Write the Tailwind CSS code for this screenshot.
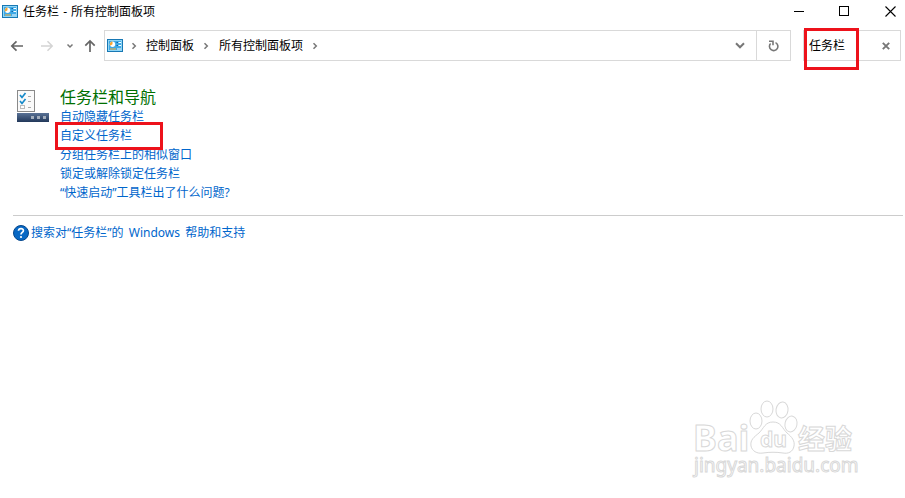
<!DOCTYPE html>
<html lang="zh-CN">
<head>
    <meta charset="UTF-8">
    <meta name="viewport" content="width=device-width, initial-scale=1.0">
    <title>任务栏 - 所有控制面板项</title>
    <script src="https://cdn.jsdelivr.net/npm/@tailwindcss/browser@4"></script>
</head>
<body class="min-h-screen bg-white font-['Noto_Sans','Noto_Sans_CJK_SC',sans-serif] text-[12px] leading-[19px] text-black">

    <!-- Shared control panel icon -->
    <svg class="hidden">
        <symbol id="control-panel" viewBox="0 0 16 13">
            <rect x="0.5" y="0.5" width="15" height="12" fill="#3fa9e6" stroke="#1878b4"/>
            <rect x="1.5" y="1.5" width="13" height="10" fill="none" stroke="#8fd6f6"/>
            <circle cx="5.5" cy="5.2" r="2.7" fill="#fff"/>
            <path d="M5.500 5.200V2.500A2.700 2.700 0 0 0 3.200 6.700z" fill="#f7a531"/>
            <path d="M9.500 3.500h1.500M9.500 6.500h1.500" stroke="#0b62a6"/>
            <path d="M11.500 3.500H14M11.500 6.500H14" stroke="#fff"/>
            <path d="M3 10h6" stroke="#ffb33a"/>
            <path d="M10 10h4" stroke="#fff"/>
        </symbol>
    </svg>

    <!-- Title bar -->
    <header class="flex h-[22px] items-center justify-between pl-[2px]">
        <div class="flex items-center gap-[5px]">
            <svg class="h-[13px] w-4"><use href="#control-panel"/></svg>
            <h1>任务栏 <span class="mx-px">-</span> 所有控制面板项</h1>
        </div>
        <div class="flex h-full">
            <button aria-label="最小化" class="flex w-[45px] items-center justify-center">
                <svg class="size-[11px]" viewBox="0 0 11 11"><path d="M0 5.500h10" stroke="#000"/></svg>
            </button>
            <button aria-label="最大化" class="flex w-[45px] items-center justify-center">
                <svg class="size-[11px]" viewBox="0 0 11 11"><rect x="0.5" y="0.5" width="9" height="9" fill="none" stroke="#000"/></svg>
            </button>
            <button aria-label="关闭" class="flex w-[38px] items-center justify-center pl-2">
                <svg class="size-[11px]" viewBox="0 0 11 11"><path d="M.5.500l10 10M10.500.500l-10 10" stroke="#000" stroke-width="1.1"/></svg>
            </button>
        </div>
    </header>

    <!-- Navigation bar -->
    <nav class="mt-2 flex h-[31px] items-center pr-1">
        <div class="flex w-[104px] shrink-0 items-center pl-[10px]">
            <button aria-label="后退" class="mr-4">
                <svg class="h-3 w-[14px]" viewBox="0 0 14 12" fill="none" stroke="#666" stroke-width="1.7"><path d="M13 6H2M6.500 1.300L1.800 6l4.700 4.700"/></svg>
            </button>
            <button aria-label="前进" class="mr-3">
                <svg class="h-3 w-[14px]" viewBox="0 0 14 12" fill="none" stroke="#d4d4d4" stroke-width="1.5"><path d="M1 6h11M7.500 1.300L12.200 6l-4.700 4.700"/></svg>
            </button>
            <button aria-label="最近浏览的位置" class="mr-[10px]">
                <svg class="h-[6px] w-2" viewBox="0 0 8 6" fill="none" stroke="#777" stroke-width="1.5"><path d="M1.500 1.500L4 4l2.500-2.500"/></svg>
            </button>
            <button aria-label="向上">
                <svg class="h-[14px] w-3" viewBox="0 0 12 14" fill="none" stroke="#666" stroke-width="1.7"><path d="M6 13V2M1.300 6.700L6 2l4.700 4.700"/></svg>
            </button>
        </div>

        <div class="flex h-full flex-1 items-center border border-[#d9d9d9] pl-[2px]">
            <svg class="h-[13px] w-4"><use href="#control-panel"/></svg>
            <svg class="ml-2 h-2 w-[6px]" viewBox="0 0 6 8" fill="none" stroke="#777" stroke-width="1.5"><path d="M1.500 1.200L4.300 4 1.500 6.800"/></svg>
            <a href="#" class="ml-[9px]">控制面板</a>
            <svg class="ml-[9px] h-2 w-[6px]" viewBox="0 0 6 8" fill="none" stroke="#777" stroke-width="1.5"><path d="M1.500 1.200L4.300 4 1.500 6.800"/></svg>
            <a href="#" class="ml-[10px]">所有控制面板项</a>
            <svg class="ml-[9px] h-2 w-[6px]" viewBox="0 0 6 8" fill="none" stroke="#777" stroke-width="1.5"><path d="M1.500 1.200L4.300 4 1.500 6.800"/></svg>
            <button aria-label="以前的位置" class="mr-[11px] ml-auto">
                <svg class="h-[7px] w-[10px]" viewBox="0 0 10 7" fill="none" stroke="#777" stroke-width="2"><path d="M1 1.300l4 4 4-4"/></svg>
            </button>
            <button aria-label="刷新" class="flex h-full w-[34px] items-center justify-center border-l border-[#d9d9d9]">
                <svg class="h-3 w-[11px]" viewBox="0 0 11 12" fill="none" stroke="#777" stroke-width="1.6"><path d="M7.500 2.600A4.200 4.200 0 1 1 2.600 3.500"/><path d="M1 1.200h4v4"/></svg>
            </button>
        </div>

        <form class="relative ml-3 flex h-full w-[98px] shrink-0 items-center border border-[#d9d9d9] pl-[5px]">
            <input type="text" aria-label="搜索" value="任务栏" class="w-[60px] outline-none">
            <button type="button" aria-label="清除" class="ml-[13px]">
                <svg class="size-2" viewBox="0 0 8 8" stroke="#777" stroke-width="1.9"><path d="M.8.800l6.400 6.400M7.200.800L.8 7.200"/></svg>
            </button>
            <span class="pointer-events-none absolute -top-[3px] left-0 h-[42px] w-[55px] border-3 border-[#ed121b]"></span>
        </form>
    </nav>

    <!-- Search results -->
    <main class="pt-[27px] pr-[2px] pl-[13px]">
        <section class="flex gap-[11px] pl-1">
            <svg class="mt-[2px] h-[33px] w-8 shrink-0" viewBox="0 0 32 33">
                <defs>
                    <linearGradient id="bar" x1="0" y1="0" x2="0" y2="1">
                        <stop offset="0" stop-color="#5a7296"/>
                        <stop offset="1" stop-color="#22385a"/>
                    </linearGradient>
                </defs>
                <rect x="0.500" y="0.500" width="17" height="21" fill="#fafafa" stroke="#8a8a8a"/>
                <path d="M3 5l2 2.500L8.500 3M3 11l2 2.500L8.500 9" fill="none" stroke="#1689c9" stroke-width="1.700"/>
                <rect x="3.500" y="15.500" width="4" height="3" fill="#fff" stroke="#bbb"/>
                <path d="M11 6.500h3M11 11.500h3M11 17.500h3" stroke="#aaa"/>
                <rect y="23" width="32" height="9" fill="url(#bar)"/>
                <path d="M14 27.500h3M20 27.500h3M26 27.500h3" stroke="#a3aebd" stroke-width="3"/>
            </svg>
            <div class="text-[#0066cc]">
                <h2 class="text-[16px] text-[#007000]"><a href="#">任务栏和导航</a></h2>
                <ul>
                    <li><a href="#">自动隐藏任务栏</a></li>
                    <li class="relative">
                        <a href="#">自定义任务栏</a>
                        <span class="pointer-events-none absolute -top-1 -left-[5px] h-7 w-[108px] border-3 border-[#ed121b]"></span>
                    </li>
                    <li><a href="#">分组任务栏上的相似窗口</a></li>
                    <li><a href="#">锁定或解除锁定任务栏</a></li>
                    <li><a href="#">“快速启动”工具栏出了什么问题?</a></li>
                </ul>
            </div>
        </section>

        <hr class="mt-[13px] border-[#cccccc]">

        <a href="#" class="mt-[7px] flex items-center gap-[2px] text-[#0066cc]">
            <svg class="size-4" viewBox="0 0 16 16">
                <circle cx="8" cy="8" r="7.500" fill="#0868c4" stroke="#06478c"/>
                <path d="M5.500 5.800C5.700 2.700 10.500 2.900 10.400 5.700 10.300 7.500 8 7.400 8 9.500" fill="none" stroke="#fff" stroke-width="1.700"/>
                <circle cx="8" cy="12" r="1.100" fill="#fff"/>
            </svg>
            <span>搜索对“任务栏”的 <span class="mx-[2px]">Windows</span> 帮助和支持</span>
        </a>
    </main>

    <!-- Watermark -->
    <svg class="pointer-events-none absolute right-[45px] bottom-[15px] h-[86px] w-[170px]" viewBox="0 0 170 86" fill="#fff" stroke="#d8d8d8">
        <g class="font-['Noto_Sans','Noto_Sans_CJK_SC',sans-serif] font-bold">
            <text x="3" y="54" font-size="36">Bai</text>
            <text x="108" y="52" font-size="27">经验</text>
        </g>
        <ellipse cx="66" cy="24" rx="6" ry="8"/>
        <ellipse cx="77" cy="12" rx="6" ry="8"/>
        <ellipse cx="92" cy="13" rx="6" ry="8" transform="rotate(8 92 13)"/>
        <ellipse cx="101" cy="27" rx="6" ry="8" transform="rotate(12 101 27)"/>
        <path d="M83 25c8 0 9 6 14 11 5 4 8 8 7 13-1 6-6 8-11 7-7-1-13-1-20 0-6 1-11-2-12-7-1-6 3-9 8-13 5-5 6-11 14-11z"/>
        <text x="70" y="50" font-size="21" class="font-['Noto_Sans',sans-serif] font-bold">du</text>
        <text x="4" y="75" font-size="19" class="font-['Noto_Sans',sans-serif]">jingyan.baidu.com</text>
    </svg>

</body>
</html>
